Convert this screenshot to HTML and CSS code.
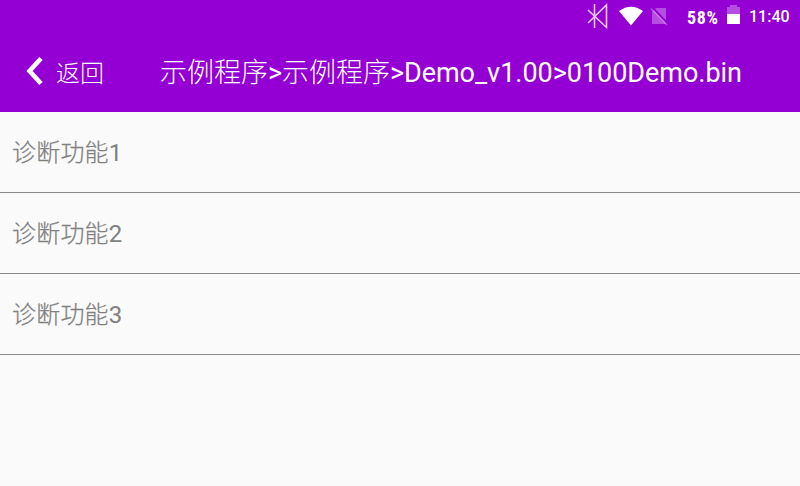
FILE: index.html
```html
<!DOCTYPE html>
<html lang="zh-CN">
<head>
<meta charset="utf-8">
<title>Demo</title>
<link rel="stylesheet" href="styles.css">
</head>
<body>
<header class="header">
  <div class="status">
    <svg class="bluetooth" width="22" height="32" viewBox="586 0 22 32"><path d="M588 10L606.500 27.500V5L588 23M594.500 4V28" /></svg>
    <svg class="wifi" width="26" height="32" viewBox="618 0 26 32"><path d="M619 11Q631 2.500 643 11L631 25.500Z"/></svg>
    <svg class="nosim" width="20" height="32" viewBox="650 0 20 32"><path class="card" d="M656 8H666V24H652V12Z"/><path class="slash" d="M653 8L668 24"/><path class="line" d="M651 8.500L667 25"/></svg>
    <span class="percent">58%</span>
    <svg class="battery" width="13" height="32" viewBox="727 0 13 32"><path class="empty" d="M727 7H730V5H737V7H740V14H727Z"/><path d="M727 14H740V24H727Z"/></svg>
    <span class="clock">11:40</span>
  </div>
  <div class="titlebar">
    <a class="back"><svg width="18" height="32" viewBox="0 0 18 32"><path d="M15 3.500L3.500 16L15 28.500"/></svg><span>返回</span></a>
    <h1 class="title"><span>示例程序</span>&gt;<span>示例程序</span>&gt;Demo_v1.00&gt;0100Demo.bin</h1>
  </div>
</header>
<ul class="list">
  <li><span>诊断功能</span>1</li>
  <li><span>诊断功能</span>2</li>
  <li><span>诊断功能</span>3</li>
</ul>
</body>
</html>
```
FILE: styles.css
```css
* { box-sizing: border-box; }
body { margin: 0; height: 486px; background: #fafafa; font-family: Roboto, "Noto Sans CJK SC", sans-serif; }
.header { height: 112px; background: #9400d3; color: #fff; }
.header span { font-weight: 300; }
.status { height: 32px; display: flex; align-items: center; padding-left: 586px; fill: #fff; white-space: nowrap; }
.status svg { flex: none; }
.bluetooth { fill: none; stroke: #fff; stroke-width: 1.6; opacity: .8; }
.wifi { margin-left: 10px; }
.nosim { margin-left: 6px; }
.card, .empty { fill: #fff; opacity: .3; }
.slash { stroke: #9400d3; stroke-width: 2; }
.line { stroke: #fff; stroke-width: 1.5; opacity: .3; }
.status .percent { font: 700 18px/20px "Roboto Condensed", Roboto, sans-serif; width: 40px; margin-left: 17px; padding-top: 3px; letter-spacing: .6px; }
.status .clock { font: 500 16px/20px Roboto, sans-serif; margin-left: 9px; padding-top: 2px; }
.titlebar { height: 80px; display: flex; align-items: center; padding-bottom: 2px; }
.back { display: flex; align-items: center; width: 160px; padding-left: 26px; font-size: 24px; flex: none; }
.back svg { fill: none; stroke: #fff; stroke-width: 4.6; margin-right: 12px; }
.title { margin: 0; padding-bottom: 2px; font-size: 27px; letter-spacing: -.03px; font-weight: 400; white-space: nowrap; }
.list { list-style: none; margin: 0; padding: 0; color: #808080; }
.list li { height: 81px; border-bottom: 1px solid #888; padding: 1px 12px 0; line-height: 80px; font-size: 24px; letter-spacing: .2px; }
.list span { font-weight: 300; -webkit-text-stroke: .25px #808080; }
```
